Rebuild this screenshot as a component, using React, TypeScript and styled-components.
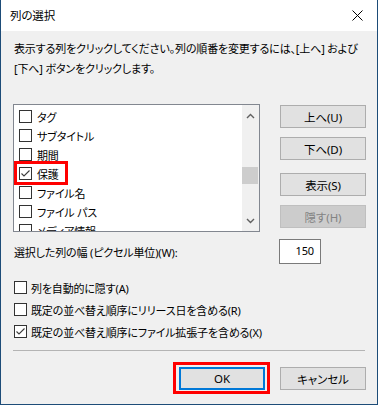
import React from 'react'
import styled, { createGlobalStyle } from 'styled-components'

const Global = createGlobalStyle`
  html, body {
    margin: 0;
    padding: 0;
    background: #fff;
  }
  body {
    font-family: "Noto Sans", "Noto Sans CJK JP", sans-serif;
    font-size: 11px;
    letter-spacing: -0.15px;
    color: #000;
    font-feature-settings: "palt";
  }
`

const columns = ['タグ', 'サブタイトル', '期間', '保護', 'ファイル名', 'ファイル パス', 'メディア情報']

const CheckBox = ({ checked }: { checked?: boolean }) => (
  <Box>
    {checked && (
      <svg width="11" height="11" viewBox="0 0 11 11">
        <polyline points="1.5,5.5 4,8 9.5,2.5" fill="none" stroke="#3c3c3c" strokeWidth="1.1" />
      </svg>
    )}
  </Box>
)

export default function App() {
  return (
    <>
      <Global />
      <Window>
        <TitleBar>
          <Title>列の選択</Title>
          <Close>
            <svg width="11" height="11" viewBox="0 0 11 11">
              <path d="M0.5 0.5 L10.5 10.5 M10.5 0.5 L0.5 10.5" stroke="#000" strokeWidth="1" />
            </svg>
          </Close>
        </TitleBar>
        <Body>
          <Instructions>
            表示する列をクリックしてください。列の順番を変更するには、[上へ] および
            <br />
            [下へ] ボタンをクリックします。
          </Instructions>
          <MainRow>
            <ListBox>
              <Items>
                {columns.map((c) => (
                  <Item key={c}>
                    <CheckBox checked={c === '保護'} />
                    <span>{c}</span>
                    {c === '保護' && <RowMark />}
                  </Item>
                ))}
              </Items>
              <ScrollBar>
                <svg width="9" height="6" viewBox="0 0 9 6">
                  <polyline points="1,5 4.5,1.5 8,5" fill="none" stroke="#606060" strokeWidth="1.4" />
                </svg>
                <Track>
                  <Thumb />
                </Track>
                <svg width="9" height="6" viewBox="0 0 9 6">
                  <polyline points="1,1 4.5,4.5 8,1" fill="none" stroke="#606060" strokeWidth="1.4" />
                </svg>
              </ScrollBar>
            </ListBox>
            <SideButtons>
              <Button>上へ(U)</Button>
              <Button>下へ(D)</Button>
              <Button $spaced>表示(S)</Button>
              <Button disabled>隠す(H)</Button>
            </SideButtons>
          </MainRow>
          <WidthRow>
            <span>選択した列の幅 (ピクセル単位)(W):</span>
            <WidthInput>150</WidthInput>
          </WidthRow>
          <Options>
            <Option>
              <CheckBox />
              <span>列を自動的に隠す(A)</span>
            </Option>
            <Option>
              <CheckBox />
              <span>既定の並べ替え順序にリリース日を含める(R)</span>
            </Option>
            <Option>
              <CheckBox checked />
              <span>既定の並べ替え順序にファイル拡張子を含める(X)</span>
            </Option>
          </Options>
          <Separator />
          <Footer>
            <OkWrap>
              <Button $default>OK</Button>
            </OkWrap>
            <Button>キャンセル</Button>
          </Footer>
        </Body>
      </Window>
    </>
  )
}

const Window = styled.div`
  width: 378px;
  height: 405px;
  box-sizing: border-box;
  border: 1px solid #1d4c78;
  border-top: none;
  display: flex;
  flex-direction: column;
  background: #f0f0f0;
`

const TitleBar = styled.div`
  height: 31px;
  background: #fff;
  display: flex;
  align-items: center;
  justify-content: space-between;
  padding: 0 9px 0 9px;
  flex-shrink: 0;
`

const Title = styled.div`
  font-size: 11.5px;
  padding-bottom: 1px;
`

const Close = styled.div`
  width: 11px;
  height: 11px;
  margin-right: 5px;
  margin-top: -1px;
  display: flex;
`

const Body = styled.div`
  flex: 1;
  padding: 0 11px 0 12px;
`

const Instructions = styled.div`
  margin-top: 8px;
  padding-left: 1px;
  line-height: 20px;
  white-space: nowrap;
`

const MainRow = styled.div`
  margin-top: 25px;
  display: flex;
  justify-content: space-between;
  align-items: flex-start;
`

const ListBox = styled.div`
  width: 247px;
  height: 128px;
  box-sizing: border-box;
  border: 1px solid #828790;
  background: #fff;
  display: flex;
`

const Items = styled.div`
  flex: 1;
  overflow: hidden;
  padding-top: 2px;
`

const Item = styled.div`
  position: relative;
  height: 19px;
  display: flex;
  align-items: center;
  gap: 5px;
  padding-left: 5px;
  white-space: nowrap;
`

const RowMark = styled.div`
  position: absolute;
  left: 0;
  top: -3px;
  width: 54px;
  height: 24px;
  box-sizing: border-box;
  border: 3px solid #ff0000;
`

const Box = styled.div`
  width: 13px;
  height: 13px;
  box-sizing: border-box;
  border: 1px solid #333;
  background: #fff;
  display: flex;
  align-items: center;
  justify-content: center;
  flex-shrink: 0;
`

const ScrollBar = styled.div`
  width: 17px;
  background: #f0f0f0;
  display: flex;
  flex-direction: column;
  align-items: center;
  padding: 8px 0 7px;
  box-sizing: border-box;
`

const Track = styled.div`
  flex: 1;
  width: 100%;
  padding-top: 48px;
  box-sizing: border-box;
`

const Thumb = styled.div`
  width: 16px;
  height: 17px;
  background: #cdcdcd;
`

const SideButtons = styled.div`
  padding-top: 1px;
  display: flex;
  flex-direction: column;
  gap: 9px;
`

const Button = styled.button<{ $spaced?: boolean; $default?: boolean }>`
  width: 86px;
  height: 23px;
  box-sizing: border-box;
  margin: 0;
  margin-top: ${(p) => (p.$spaced ? '4px' : '0')};
  padding: 0;
  font: inherit;
  font-size: 11.5px;
  letter-spacing: -0.1px;
  color: #000;
  background: #e1e1e1;
  border: ${(p) => (p.$default ? '2px solid #0078d7' : '1px solid #adadad')};
  display: flex;
  align-items: center;
  justify-content: center;

  &:disabled {
    background: #cccccc;
    border-color: #bfbfbf;
    color: #838383;
  }
`

const WidthRow = styled.div`
  margin-top: 7px;
  display: flex;
  align-items: center;
  justify-content: space-between;
  padding-left: 1px;
  padding-right: 45px;
`

const WidthInput = styled.div`
  width: 42px;
  height: 25px;
  box-sizing: border-box;
  border: 1px solid #7a7a7a;
  background: #fff;
  text-align: right;
  padding-right: 6px;
  line-height: 22px;
`

const Options = styled.div`
  margin-top: 13px;
  display: flex;
  flex-direction: column;
  gap: 1px;
  padding-left: 1px;
`

const Option = styled.div`
  height: 21px;
  display: flex;
  align-items: center;
  gap: 4px;
  white-space: nowrap;
`

const Separator = styled.div`
  margin-top: 8px;
  height: 1px;
  margin-right: 1px;
  background: #b4b4b4;
`

const Footer = styled.div`
  margin-top: 16px;
  display: flex;
  justify-content: flex-end;
  gap: 15px;
`

const OkWrap = styled.div`
  position: relative;

  &::after {
    content: '';
    position: absolute;
    left: -6px;
    top: -5px;
    right: -5px;
    bottom: -4px;
    border: 3px solid #ff0000;
  }
`
